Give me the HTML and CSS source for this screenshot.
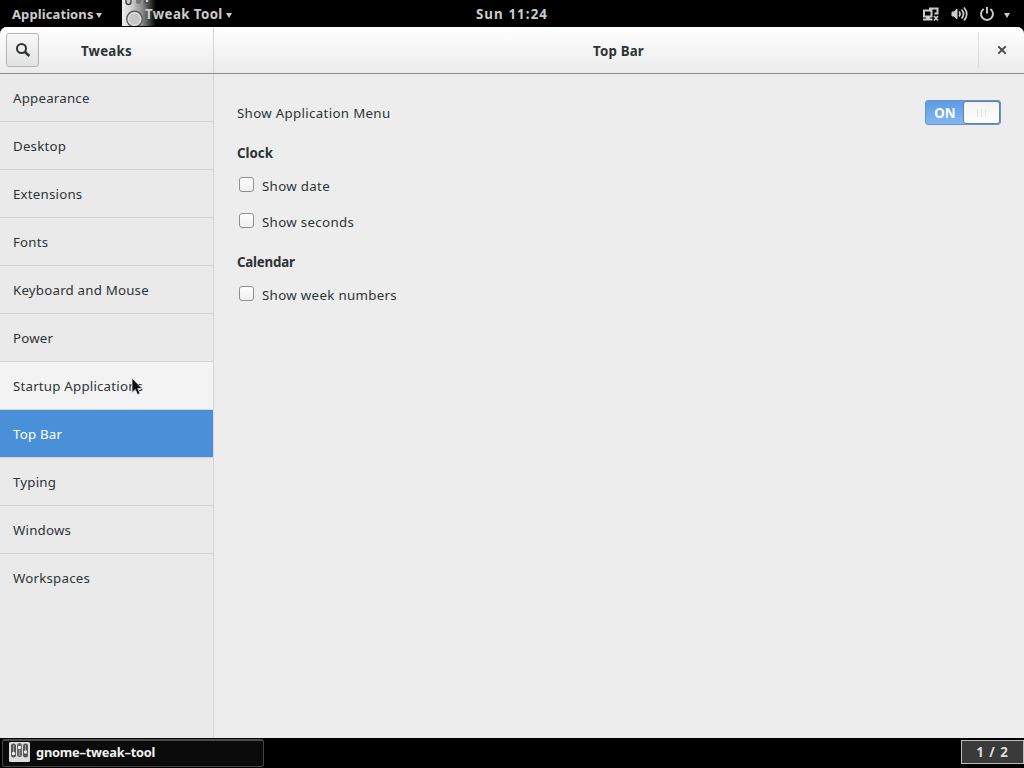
FILE: index.html
```html
<!DOCTYPE html>
<html lang="en">
<head>
    <meta charset="UTF-8">
    <meta name="viewport" content="width=device-width, initial-scale=1.0">
    <title>Tweak Tool</title>
    <link rel="stylesheet" href="styles.css">
</head>
<body>

<!-- TOP PANEL -->
<div class="panel">
    <div class="panel-left">
        <span class="applications">Applications</span>
        <span class="caret"></span>
        <div class="app-menu">
            <svg class="app-icon" width="34" height="26" viewBox="0 0 34 26">
                <defs>
                    <linearGradient id="fade" x1="0" x2="1" y1="0" y2="0">
                        <stop offset="0" stop-color="#eee"/>
                        <stop offset=".3" stop-color="#ccc"/>
                        <stop offset=".6" stop-color="#888"/>
                        <stop offset="1" stop-color="#000"/>
                    </linearGradient>
                </defs>
                <rect width="34" height="26" fill="url(#fade)"/>
                <path d="M4 0v2a2.5 2.5 0 0 0 5 0V0M23 0v1a2 2 0 0 0 4 0V0" fill="#ccc" stroke="#444" stroke-width="1.4"/>
                <path d="M14 0h5v3q-2.5 2-5 0z" fill="#777"/>
                <circle cx="12.5" cy="19" r="7.8" fill="#c6c6c6" stroke="#555" stroke-width="1.2"/>
                <circle cx="12.5" cy="19" r="6" fill="none" stroke="#e4e4e4"/>
            </svg>
            <span class="tweak-tool">Tweak Tool</span>
            <span class="caret"></span>
        </div>
    </div>
    <span class="time">Sun 11:24</span>
    <div class="status">
        <svg width="18" height="16" viewBox="0 0 18 16" fill="none" stroke="#ccc" stroke-width="2">
            <path d="M2 4.5h7.500v6H2zM7 2.500h8.500v5h-3"/>
            <path d="M1 13.500h9.500M4 11.500h4"/>
            <path d="M12 10l4 4.500M16 10l-4 4.500" stroke-width="1.700"/>
        </svg>
        <svg width="17" height="16" viewBox="0 0 17 16" fill="none" stroke="#ccc" stroke-width="1.700">
            <path d="M1 6h2l3-3v10L3 10H1z" fill="#ccc" stroke-width="1"/>
            <path d="M8 5.500q2.200 2.300 0 5M10.500 3.500q4 4.500 0 9M13 1.500q5.500 6.500 0 13"/>
        </svg>
        <svg width="16" height="16" viewBox="0 0 16 16" fill="none" stroke="#ccc" stroke-width="1.900">
            <path d="M4.700 3a6 6 0 1 0 6.600 0M8 1v6.500"/>
        </svg>
        <span class="caret"></span>
    </div>
</div>

<!-- WINDOW -->
<div class="window">
    <div class="header">
        <div class="header-left">
            <button class="search-btn">
                <svg width="16" height="16" viewBox="0 0 16 16" fill="none" stroke="#2e3436">
                    <circle cx="6.5" cy="6.5" r="4.500" stroke-width="2"/>
                    <path d="M9.500 9.500l4.800 4.500" stroke-width="2.400"/>
                </svg>
            </button>
            <h1 class="title tweaks">Tweaks</h1>
        </div>
        <div class="header-right">
            <h1 class="title page-title">Top Bar</h1>
            <button class="close-btn">
                <svg width="10" height="10" viewBox="0 0 10 10" fill="none" stroke="#444" stroke-width="1.900">
                    <path d="M1.300 1.300l7.400 7.400M8.700 1.300L1.300 8.700"/>
                </svg>
            </button>
        </div>
    </div>

    <div class="content">
        <ul class="sidebar">
            <li>Appearance</li>
            <li>Desktop</li>
            <li>Extensions</li>
            <li>Fonts</li>
            <li>Keyboard and Mouse</li>
            <li>Power</li>
            <li class="hover">Startup Applications</li>
            <li class="selected">Top Bar</li>
            <li>Typing</li>
            <li>Windows</li>
            <li>Workspaces</li>
        </ul>

        <div class="settings">
            <div class="setting-row">
                <span>Show Application Menu</span>
                <div class="switch">
                    <span class="switch-label">ON</span>
                    <span class="switch-handle"><i></i><i></i><i></i></span>
                </div>
            </div>
            <h2>Clock</h2>
            <label class="check-row"><span class="checkbox"></span>Show date</label>
            <label class="check-row"><span class="checkbox"></span>Show seconds</label>
            <h2 class="calendar">Calendar</h2>
            <label class="check-row"><span class="checkbox"></span>Show week numbers</label>
        </div>
    </div>
</div>

<!-- TASKBAR -->
<div class="taskbar">
    <div class="task">
        <svg width="21" height="20" viewBox="0 0 21 20">
            <rect width="21" height="20" rx="1.5" fill="#ddd"/>
            <rect x="2" y="1.5" width="5" height="14" rx="2.5" fill="#555"/>
            <rect x="8" y="1" width="5" height="14" rx="2.5" fill="#666"/>
            <rect x="14" y="1.5" width="5" height="14" rx="2.5" fill="#555"/>
            <path d="M4.500 3v7M10.500 8v6M16.500 3v6" stroke="#999"/>
            <circle cx="4.5" cy="11.5" r="1.7" fill="#eee"/>
            <circle cx="10.5" cy="5.5" r="1.7" fill="#eee"/>
            <circle cx="16.5" cy="10" r="1.7" fill="#eee"/>
        </svg>
        <span>gnome–tweak–tool</span>
    </div>
    <div class="workspace">1 / 2</div>
</div>

<!-- mouse pointer -->
<svg class="pointer" width="14" height="20" viewBox="0 0 14 20">
    <path d="M1 1v14.500l3.300-3 2.200 5 2.500-1-2.200-5H11z" fill="#111" stroke="#ddd" stroke-width=".8"/>
</svg>

</body>
</html>
```
FILE: styles.css
```css
* {
    box-sizing: border-box;
}
body {
    margin: 0;
    width: 1024px;
    height: 768px;
    display: flex;
    flex-direction: column;
    overflow: hidden;
    background: #000;
    color: #2e3436;
    font-family: "Noto Sans", "Open Sans", sans-serif;
    font-size: 13.3px;
    line-height: 20px;
    white-space: nowrap;
}
h1, h2, ul {
    margin: 0;
    padding: 0;
}
button {
    padding: 0;
    border: none;
    background: none;
}
svg {
    display: block;
    flex: none;
}

/* top panel */
.panel {
    height: 27px;
    flex: none;
    display: grid;
    grid-template-columns: 1fr auto 1fr;
    align-items: center;
    color: #ccc;
    font-weight: bold;
}
.panel-left, .app-menu, .status {
    display: flex;
    align-items: center;
}
.panel-left {
    padding-left: 12px;
}
.applications {
    width: 82px;
    font-size: 13px;
    letter-spacing: 0.1px;
}
.caret {
    width: 0;
    margin: 3px 0 0 2px;
    border: 3px solid transparent;
    border-top: 5px solid #ccc;
    border-bottom: none;
}
.app-menu {
    margin-left: 20px;
}
.app-icon {
    margin: 0 -11px 1px 0;
}
.tweak-tool {
    width: 79px;
    z-index: 1;
    letter-spacing: 0.4px;
}
.time {
    letter-spacing: 1.1px;
}
.status {
    justify-content: flex-end;
    padding-right: 14px;
    gap: 11px;
}
.status .caret {
    margin-left: -2px;
}

/* window */
.window {
    flex: 1;
    display: flex;
    flex-direction: column;
    min-height: 0;
    border-radius: 7px 7px 0 0;
    overflow: hidden;
    background: #ededed;
}
.header {
    height: 47px;
    flex: none;
    display: flex;
    background: linear-gradient(#fff, #ebebeb);
    border-bottom: 1px solid #8c8c8c;
}
.header-left {
    width: 214px;
    display: flex;
    align-items: center;
    padding: 0 0 1px 6px;
    border-right: 1px solid #d5d5d5;
}
.search-btn {
    width: 33px;
    height: 34px;
    display: flex;
    align-items: center;
    justify-content: center;
    border: 1px solid #b5b5b5;
    border-radius: 3px;
    background: linear-gradient(#f8f8f8, #e2e2e2);
}
.title {
    font-size: 13.3px;
    font-weight: bold;
    letter-spacing: 0.2px;
}
.tweaks {
    margin-left: 42px;
    padding-top: 3px;
}
.header-right {
    flex: 1;
    display: flex;
    align-items: center;
}
.page-title {
    flex: 1;
    padding: 2px 0 0 45px;
    text-align: center;
}
.close-btn {
    width: 46px;
    height: 36px;
    display: flex;
    align-items: center;
    justify-content: center;
    border-left: 1px solid #ddd;
}
.content {
    flex: 1;
    display: flex;
}

/* sidebar */
.sidebar {
    width: 214px;
    border-right: 1px solid #d5d5d5;
    background: #eaeaea;
    list-style: none;
    letter-spacing: 0.2px;
}
.sidebar li {
    height: 48px;
    padding: 14px 0 0 13px;
    border-bottom: 1px solid #d5d5d5;
}
.sidebar li:last-child {
    border-bottom: none;
}
.sidebar .hover {
    background: #f3f3f3;
}
.sidebar .selected {
    background: #4a90d9;
    color: #fff;
}

/* settings */
.settings {
    flex: 1;
    padding: 26px 23px 0 23px;
    letter-spacing: 0.32px;
}
.setting-row {
    height: 25px;
    display: flex;
    align-items: center;
    justify-content: space-between;
}
.switch {
    width: 76px;
    height: 25px;
    display: flex;
    border: 1px solid #6c93c4;
    border-radius: 3px;
    background: linear-gradient(#5c9be6, #83b7f3);
}
.switch-label {
    width: 37px;
    padding: 2px 0 0 1px;
    text-align: center;
    font-weight: bold;
    letter-spacing: 0;
    color: #fff;
}
.switch-handle {
    width: 37px;
    height: 23px;
    display: flex;
    align-items: center;
    justify-content: center;
    gap: 3px;
    border: 1px solid #62809f;
    border-radius: 3px;
    background: linear-gradient(#f3f3f3, #fff);
}
.switch-handle i {
    width: 1px;
    height: 8px;
    background: #e2e2e2;
}
h2 {
    height: 20px;
    margin: 18px 0 5px;
    font-size: 13.3px;
    letter-spacing: 0;
}
.check-row {
    display: flex;
    height: 36px;
    padding: 8px 0 0 2px;
    gap: 8px;
}
.checkbox {
    width: 15px;
    height: 15px;
    margin-top: 1px;
    border: 1px solid #8f8f8f;
    border-radius: 3px;
    background: linear-gradient(#fff, #eee);
}
h2.calendar {
    margin-top: 12px;
    letter-spacing: -0.2px;
}

/* taskbar */
.taskbar {
    height: 30px;
    flex: none;
    display: flex;
    align-items: flex-start;
    justify-content: space-between;
    padding: 1px 0 0 2px;
    font-weight: bold;
}
.task {
    width: 262px;
    height: 28px;
    display: flex;
    align-items: center;
    gap: 6px;
    padding: 0 0 4px 6px;
    border: 1px solid #444;
    border-top: 2px solid #4c4c4c;
    border-radius: 3px;
    background: #0b0b0b;
    color: #f3f3f3;
    font-size: 12.8px;
    letter-spacing: -0.2px;
}
.workspace {
    width: 63px;
    height: 24px;
    margin-top: 1px;
    border: 1px solid #bbb;
    background: #3a3a3a;
    color: #ddd;
    text-align: center;
    line-height: 22px;
    letter-spacing: 1px;
}

.pointer {
    position: absolute;
    left: 131px;
    top: 377px;
}
```
